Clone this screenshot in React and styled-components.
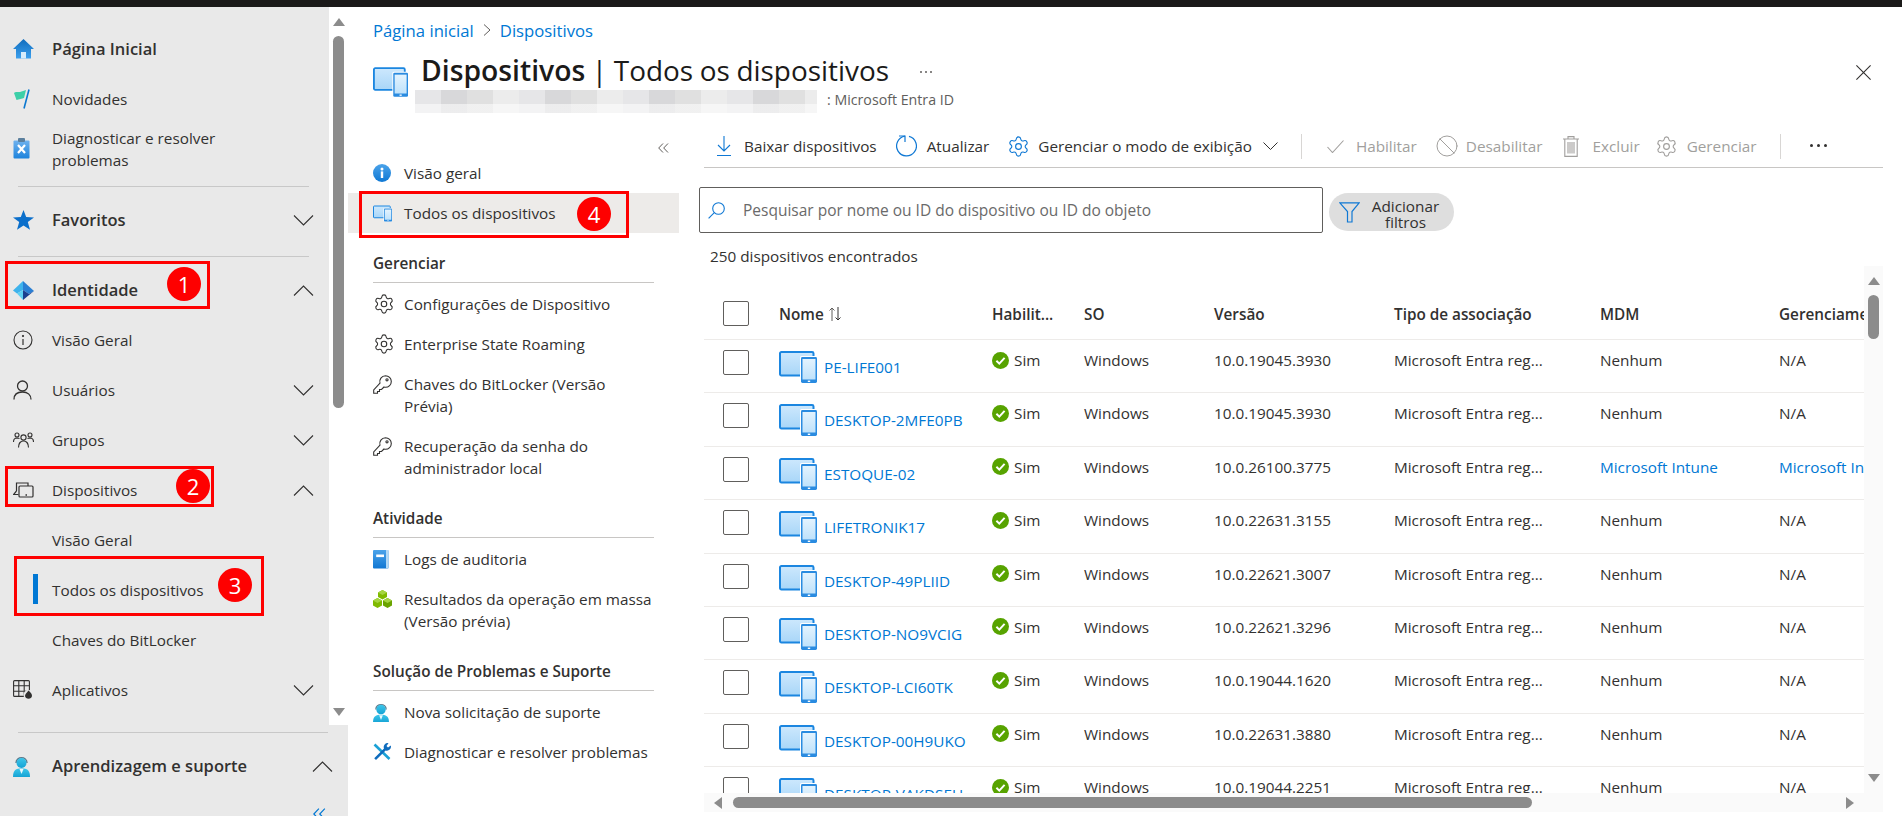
import React from 'react';
import styled, { createGlobalStyle } from 'styled-components';
import { Settings, Ban } from 'lucide-react';

const FONT = `"Open Sans", "Noto Sans", "Liberation Sans", sans-serif`;

const Global = createGlobalStyle`
  html, body { margin: 0; padding: 0; background: #fff; }
  body { font-family: ${FONT}; font-size: 15.3px; color: #323130; overflow: hidden; }
  * { box-sizing: border-box; }
`;

const Page = styled.div`
  position: relative; width: 1902px; height: 816px; overflow: hidden;
  display: flex; flex-direction: column; background: #fff;
`;
const TopBar = styled.div`height: 7px; background: #1b1a19; flex: none;`;
const Body = styled.div`flex: 1; display: flex; min-height: 0;`;

/* left navigation */
const Sidebar = styled.nav`
  width: 348px; flex: none; background: #e9e9e9; display: flex; flex-direction: column; overflow: hidden;
`;
const NavScroll = styled.div`height: 718px; flex: none; display: flex;`;
const NavList = styled.div`width: 329px; flex: none; padding-top: 17px; overflow: hidden;`;
const NavRow = styled.div`
  height: ${p => (p.$tall ? 51 : 50)}px; display: flex; align-items: center; position: relative;
  padding: 0 15px ${p => (p.$tall ? 2 : 0)}px 13px;
`;
const NavIcon = styled.span`
  width: 39px; flex: none; display: flex; align-items: center;
`;
const NavText = styled.span`
  flex: 1; line-height: 22px; white-space: nowrap; color: #323130;
  font-size: ${p => (p.$strong ? '16.5px' : '15.3px')};
  font-weight: ${p => (p.$strong ? 600 : 400)};
`;
const SubText = styled(NavText)`padding-left: 39px;`;
const ActiveBar = styled.span`
  position: absolute; left: 33px; top: 9px; width: 5px; height: 30px; background: #0078d4;
`;
const NavRule = styled.div`
  height: 1px; background: #c8c8c8; margin: 11px 20px 8px 18px;
`;
const NavTrack = styled.div`
  width: 19px; flex: none; background: #fff; display: flex; flex-direction: column; align-items: center;
  padding: 11px 0 9px 0;
`;
const NavThumb = styled.div`
  width: 11px; height: 372px; border-radius: 6px; background: #8c8c8c; margin-top: 10px; flex: none;
`;
const Spacer = styled.div`flex: 1;`;
const ArrowUp = styled.div`
  width: 0; height: 0; flex: none; border-left: 6px solid transparent; border-right: 6px solid transparent;
  border-bottom: 8px solid #8c8c8c;
`;
const ArrowDown = styled(ArrowUp)`
  border-bottom: 0; border-top: 8px solid #8c8c8c;
`;
const ArrowLeft = styled.div`
  width: 0; height: 0; flex: none; border-top: 6px solid transparent; border-bottom: 6px solid transparent;
  border-right: 8px solid #8c8c8c;
`;
const ArrowRight = styled(ArrowLeft)`
  border-right: 0; border-left: 8px solid #8c8c8c;
`;
const FootRule = styled.div`height: 1px; background: #c8c8c8; margin: 7px 20px 8px 18px; flex: none;`;
const FootRow = styled(NavRow)`flex: none;`;
const CollapseNav = styled.div`
  display: flex; justify-content: flex-end; padding-right: 22px; margin-top: 17px; height: 13px; flex: none;
`;

/* right side */
const Content = styled.main`flex: 1; min-width: 0; display: flex; flex-direction: column;`;
const Crumbs = styled.div`
  height: 46px; flex: none; display: flex; align-items: center; gap: 9px; padding-left: 25px;
  font-size: 16.7px; color: #0078d4;
`;
const CrumbSep = styled.span`display: flex;`;
const Header = styled.header`
  height: 67px; flex: none; display: flex; align-items: flex-start; padding: 0 31px 0 25px;
`;
const HeaderIcon = styled.div`width: 48px; padding-top: 14px; flex: none;`;
const TitleBlock = styled.div`flex: 1; min-width: 0;`;
const TitleLine = styled.div`display: flex; align-items: center; height: 35px; white-space: nowrap;`;
const Title = styled.h1`
  margin: 0; font-size: 27.9px; line-height: 35px; font-weight: 400; color: #1b1a19; word-spacing: -0.6px;
  b { font-weight: 600; font-size: 28.3px; }
`;
const TitleMore = styled.span`
  margin-left: 31px; margin-top: 2px; display: flex; gap: 3px;
`;
const TitleDot = styled.span`width: 2px; height: 2px; border-radius: 50%; background: #605e5c;`;
const SubLine = styled.div`display: flex; align-items: flex-start; margin: 2px 0 0 -6px;`;
const Redacted = styled.div`
  width: 402px; height: 23px; flex: none;
  background:
    linear-gradient(#fff0, #fff0 14px, #fff8 14px),
    repeating-linear-gradient(90deg, #e6e6e8 0 26px, #d8d8da 26px 52px, #e0e0e0 52px 78px, #ececec 78px 104px);
`;
const SubText2 = styled.span`
  font-size: 14.2px; line-height: 20px; color: #605e5c; white-space: nowrap; margin-left: 10px;
`;
const CloseBtn = styled.div`padding-top: 11px; flex: none;`;

const Blade = styled.div`flex: 1; min-height: 0; display: flex;`;
const BladeMenu = styled.aside`width: 331px; flex: none; display: flex; flex-direction: column;`;
const MenuCollapse = styled.div`
  height: 33px; flex: none; display: flex; justify-content: flex-end; align-items: flex-end; padding-right: 10px;
`;
const MenuRow = styled.div`
  display: flex; align-items: flex-start; padding: 9px 0 9px 25px; min-height: 40px; flex: none;
  background: ${p => (p.$active ? '#edebe9' : 'transparent')};
`;
const MenuIcon = styled.span`width: 31px; height: 22px; flex: none; display: flex; align-items: center;`;
const MenuText = styled.span`line-height: 22px; white-space: nowrap; color: #323130;`;
const MenuHead = styled.div`
  margin: 19px 25px 1px 25px; padding-bottom: 8px; border-bottom: 1px solid #c8c6c4;
  font-weight: 600; line-height: 22px; color: #323130;
`;

const Main = styled.section`flex: 1; min-width: 0; padding: 0 19px 4px 25px; display: flex; flex-direction: column;`;
const Toolbar = styled.div`
  height: 48px; flex: none; display: flex; align-items: center; border-bottom: 1px solid #c8c6c4; padding-top: 5px;
`;
const Tool = styled.div`
  display: flex; align-items: center; gap: ${p => p.$gap ?? 10}px; margin-left: ${p => p.$ml ?? 0}px;
  color: ${p => (p.$off ? '#a19f9d' : '#323130')}; white-space: nowrap;
`;
const ToolSep = styled.div`width: 1px; height: 25px; background: #d8d6d4; margin-left: ${p => p.$ml}px;`;
const Dots = styled.div`margin-left: 29px; display: flex; gap: 4px; margin-top: -2px;`;
const Dot = styled.span`width: 3px; height: 3px; border-radius: 50%; background: #323130;`;

const SearchRow = styled.div`flex: none; display: flex; margin-top: 19px; margin-left: -5px; align-items: flex-start;`;
const SearchBox = styled.div`
  width: 624px; height: 46px; border: 1px solid #605e5c; border-radius: 2px; display: flex; align-items: center;
  padding-left: 8px; gap: 18px; color: #6a6a6a; font-size: 15.5px;
`;
const FilterPill = styled.div`
  width: 125px; height: 38px; border-radius: 19px; background: #dedede; margin: 6px 0 0 6px; display: flex; align-items: center;
  padding-left: 10px;
`;
const FilterText = styled.div`flex: 1; text-align: center; line-height: 16px; padding: 4px 3px 0 0; color: #323130;`;
const Count = styled.div`flex: none; margin: 12px 0 0 6px; line-height: 22px; height: 22px; color: #323130;`;

const TableArea = styled.div`flex: 1; min-height: 0; margin-top: -1px; display: flex; flex-direction: column;`;
const TableTop = styled.div`flex: 1; min-height: 0; display: flex;`;
const Viewport = styled.div`flex: 1; min-width: 0; overflow: hidden; padding-top: 24px;`;
const GridRow = styled.div`
  display: grid; grid-template-columns: 75px 213px 92px 130px 180px 206px 179px 220px;
  height: ${p => (p.$head ? '50px' : '53.4px')}; width: 1295px;
  border-bottom: 1px solid #edebe9;
`;
const HeadCell = styled.div`
  display: flex; align-items: center; gap: 5px; font-weight: 600; white-space: nowrap; color: #323130; padding-bottom: 1px;
`;
const Check = styled.div`
  width: 26px; height: 25px; margin: ${p => (p.$head ? '11px' : '10px')} 0 0 19px; border: 1px solid #605e5c; border-radius: 2px; background: #fff;
`;
const Cell = styled.div`padding-top: 9px; height: 31px; line-height: 22px; white-space: nowrap; display: flex; align-items: center; gap: 5px;`;
const NameCell = styled.div`display: flex; align-items: flex-start; gap: 7px; padding-top: 11px; white-space: nowrap;`;
const NameLink = styled.span`color: #0078d4; line-height: 22px; margin-top: 5px;`;
const DataLink = styled.span`color: #0078d4;`;
const VTrack = styled.div`
  width: 19px; flex: none; background: #fafafa; display: flex; flex-direction: column; align-items: center; padding-top: 11px;
  padding-bottom: 11px;
`;
const VThumb = styled.div`width: 11px; height: 44px; border-radius: 6px; background: #8c8c8c; margin-top: 10px;`;
const HTrack = styled.div`
  height: 19px; flex: none; background: #fafafa; display: flex; align-items: center; padding: 0 29px 0 10px;
`;
const HThumb = styled.div`height: 11px; width: 799px; border-radius: 6px; background: #8c8c8c; margin-left: 11px; flex: none;`;

/* red annotations laid over the page */
const RedBox = styled.div`
  position: absolute; left: ${p => p.$x}px; top: ${p => p.$y}px; width: ${p => p.$w}px; height: ${p => p.$h}px;
  border: 3px solid #fe0000; pointer-events: none;
`;
const Badge = styled.div`
  position: absolute; left: ${p => p.$x - 17}px; top: ${p => p.$y - 17}px; width: 34px; height: 34px; border-radius: 50%;
  background: #fe0000; color: #fff; font-size: 22px; line-height: 34px; text-align: center;
`;

/* icons */
const Chev = ({ up }) => (
  <svg width="21" height="11" viewBox="0 0 21 11" fill="none" stroke="#323130" strokeWidth="1.1">
    <path d={up ? 'M1 10.5 L10.5 1 L20 10.5' : 'M1 .5 L10.5 10 L20 .5'} />
  </svg>
);
const HomeIcon = () => (
  <svg width="21" height="20" viewBox="0 0 21 20">
    <defs><linearGradient id="hg" x1="0" y1="0" x2="0" y2="1"><stop offset="0" stopColor="#0f6cbd" /><stop offset="1" stopColor="#3ca0ee" /></linearGradient></defs>
    <path d="M10.5 0 L21 10 H18 V19.5 H3 V10 H0 Z" fill="url(#hg)" />
    <path d="M8 13 H13 V19.5 H8 Z" fill="#d6ecfb" />
  </svg>
);
const FlagIcon = () => (
  <svg width="18" height="20" viewBox="0 0 18 20">
    <path d="M1 4 C3 2 5 3.5 7 3 C9 2.5 11 1.8 13 1 L11 9 C9 10 6 10 3.5 11 Z" fill="#3dcfa8" />
    <path d="M16 .5 L11 19.5" stroke="#0b78d0" strokeWidth="1.6" />
  </svg>
);
const ClipIcon = () => (
  <svg width="17" height="21" viewBox="0 0 17 21">
    <defs><linearGradient id="cg" x1="0" y1="0" x2="0" y2="1"><stop offset="0" stopColor="#6fb2ee" /><stop offset="1" stopColor="#1d83dc" /></linearGradient></defs>
    <rect x=".5" y="2.5" width="16" height="18" rx="1" fill="url(#cg)" />
    <rect x="5" y="0" width="7" height="4" rx="1" fill="#5b7f9d" />
    <path d="M5 7 L12 15 M12 7 L5 15" stroke="#fff" strokeWidth="2.2" />
  </svg>
);
const StarIcon = () => (
  <svg width="21" height="20" viewBox="0 0 21 20"><path d="M10.5 0 L13.2 7 L21 7.4 L14.8 12 L17 19.8 L10.5 15.4 L4 19.8 L6.2 12 L0 7.4 L7.8 7 Z" fill="#0b6fcb" /></svg>
);
const EntraIcon = () => (
  <svg width="21" height="19" viewBox="0 0 21 19">
    <path d="M10 0 L0 9.5 L4 12.5 L10 9 Z" fill="#3eb3ec" />
    <path d="M10 0 L21 10 L16 13 L10 9 Z" fill="#2a7fd4" />
    <path d="M10 9 L4 12.5 L10 19 Z" fill="#5fd0f2" />
    <path d="M10 9 L16 13 L21 10 L10 19 Z" fill="#1b3f8f" />
  </svg>
);
const InfoOutline = () => (
  <svg width="20" height="20" viewBox="0 0 20 20" fill="none" stroke="#323130"><circle cx="10" cy="10" r="9" strokeWidth="1.1" /><path d="M10 9 V15" strokeWidth="1.2" /><circle cx="10" cy="6" r=".7" fill="#323130" /></svg>
);
const UserIcon = () => (
  <svg width="19" height="20" viewBox="0 0 19 20" fill="none" stroke="#323130" strokeWidth="1.3"><circle cx="9.5" cy="6" r="5" /><path d="M1 19.5 C1 14.5 4.5 12 9.5 12 C14.5 12 18 14.5 18 19.5" /></svg>
);
const GroupIcon = () => (
  <svg width="21" height="17" viewBox="0 0 21 17" fill="none" stroke="#323130" strokeWidth="1.1">
    <circle cx="4" cy="3" r="2" /><circle cx="17" cy="3" r="2" /><circle cx="10.5" cy="5.5" r="2.6" />
    <path d="M.5 10 C.5 7 2 6 4 6 L6.5 6.5 M20.5 10 C20.5 7 19 6 17 6 L14.5 6.5 M5.5 15.5 C5.5 11 8 9 10.5 9 C13 9 15.5 11 15.5 15.5" />
  </svg>
);
const DevicesOutline = () => (
  <svg width="21" height="16" viewBox="0 0 21 16" fill="none" stroke="#323130" strokeWidth="1.2">
    <path d="M3.5 9 V1 H15 V4 M3.5 9 L.5 12.5 H5.5" />
    <rect x="6" y="4" width="14" height="11" rx="1" />
    <path d="M12.5 13 H14" strokeWidth="1.4" />
  </svg>
);
const AppsIcon = () => (
  <svg width="21" height="20" viewBox="0 0 21 20">
    <g fill="none" stroke="#323130" strokeWidth="1.1">
      <rect x=".6" y=".6" width="15.8" height="15.8" rx="1" />
      <path d="M5.8 .6 V16.4 M11.2 .6 V16.4 M.6 5.8 H16.4 M.6 11.2 H16.4" />
    </g>
    <circle cx="15.5" cy="15" r="5" fill="#e9e9e9" />
    <path d="M15.5 10.5 C17.8 12.4 19 14 19 16 A3.6 3.6 0 0 1 12 16 C12 14 13.5 13 15.5 10.5 Z" fill="#323130" />
  </svg>
);
const SupportIcon = ({ s = 17 }) => (
  <svg width={s} height={s * 1.3} viewBox="0 0 17 22">
    <defs><linearGradient id="sg" x1="0" y1="0" x2="0" y2="1"><stop offset="0" stopColor="#3cc6ea" /><stop offset="1" stopColor="#15a2d4" /></linearGradient></defs>
    <path d="M3 8 C3 1 14 1 14 8" fill="none" stroke="#5d7a8c" strokeWidth="1.4" />
    <circle cx="8.5" cy="8" r="5" fill="url(#sg)" />
    <path d="M0 22 C0 15 3 13.5 8.5 13.5 C14 13.5 17 15 17 22 Z" fill="url(#sg)" />
    <path d="M6.5 14 L8.5 19 L10.5 14 Z" fill="#e9f8fd" />
  </svg>
);
const DevicesColor = ({ w = 35, h = 30 }) => (
  <svg width={w} height={h} viewBox="0 0 38 32">
    <defs>
      <linearGradient id="dg" x1="0" y1="0" x2="0" y2="1"><stop offset="0" stopColor="#cde8fd" /><stop offset="1" stopColor="#a8d6f8" /></linearGradient>
      <linearGradient id="dp" x1="0" y1="0" x2="0" y2="1"><stop offset="0" stopColor="#e3f3fe" /><stop offset="1" stopColor="#bfe2fb" /></linearGradient>
    </defs>
    <rect x="1" y="1" width="33.5" height="23.5" rx="1.4" fill="url(#dg)" stroke="#1b86e0" strokeWidth="2" />
    <rect x="21" y="5" width="17" height="27" rx="1.6" fill="#fff" />
    <rect x="22" y="6" width="16" height="26" rx="1.4" fill="#2a8be0" />
    <rect x="23.5" y="8" width="13" height="20.5" fill="url(#dp)" />
    <rect x="28.8" y="29.6" width="2.4" height="1.4" fill="#fff" />
  </svg>
);
const SimIcon = () => (
  <svg width="17" height="17" viewBox="0 0 17 17"><circle cx="8.5" cy="8.5" r="8.5" fill="#57a300" /><path d="M4.4 8.8 L7.3 11.6 L12.6 5.8" fill="none" stroke="#fff" strokeWidth="2" /></svg>
);
const InfoFill = () => (
  <svg width="18" height="18" viewBox="0 0 18 18"><defs><linearGradient id="ig" x1="0" y1="0" x2="0" y2="1"><stop offset="0" stopColor="#4ba3ea" /><stop offset="1" stopColor="#0f78d4" /></linearGradient></defs><circle cx="9" cy="9" r="9" fill="url(#ig)" /><rect x="7.8" y="7.4" width="2.4" height="6.6" fill="#fff" /><circle cx="9" cy="5" r="1.5" fill="#fff" /></svg>
);
const BookIcon = () => (
  <svg width="16" height="19" viewBox="0 0 16 19"><defs><linearGradient id="bg" x1="0" y1="0" x2="0" y2="1"><stop offset="0" stopColor="#4ba3ea" /><stop offset="1" stopColor="#1077d3" /></linearGradient></defs><rect width="15.5" height="18.5" rx="1" fill="url(#bg)" /><rect x="13" width="2.5" height="18.5" fill="#b3d9f5" /><rect x="3.2" y="4.5" width="7.8" height="2.6" fill="#fff" /></svg>
);
const CubesIcon = () => (
  <svg width="19" height="18" viewBox="0 0 19 18">
    <path d="M9.5 0 L14 2.5 L14 7 L9.5 9.5 L5 7 L5 2.5 Z" fill="#7fba00" /><path d="M5 2.5 L9.5 5 L14 2.5 L9.5 0Z" fill="#a5d540" />
    <path d="M4.5 8 L9 10.5 L9 15.5 L4.5 18 L0 15.5 L0 10.5 Z" fill="#7fba00" /><path d="M0 10.5 L4.5 13 L9 10.5 L4.5 8Z" fill="#a5d540" />
    <path d="M14.5 8 L19 10.5 L19 15.5 L14.5 18 L10 15.5 L10 10.5 Z" fill="#6aa300" /><path d="M10 10.5 L14.5 13 L19 10.5 L14.5 8Z" fill="#a5d540" />
  </svg>
);
const ToolsIcon = () => (
  <svg width="18" height="18" viewBox="0 0 18 18">
    <path d="M1.5 1.5 L16.5 16" stroke="#1aa1d6" strokeWidth="2.6" />
    <path d="M15.5 .2 A4 4 0 0 0 11 5.6 L1.2 15.2 L3 17 L12.6 7.4 A4 4 0 0 0 17.8 2.5 L15 4.5 L13.5 3 Z" fill="#0f6cbd" />
  </svg>
);
const Gear = ({ c = '#323130', s = 23 }) => <Settings size={s} color={c} strokeWidth={1.2} />;
const KeyIcon = () => (
  <svg width="19" height="19" viewBox="0 0 19 19" fill="none" stroke="#323130" strokeWidth="1.1">
    <path d="M12.5 .7 A5.8 5.8 0 0 1 12.5 12.3 A5.8 5.8 0 0 1 11 12 L8.5 14.5 H6.5 V16.5 H4.5 V18.3 H.7 V15 L7 8.2 A5.8 5.8 0 0 1 12.5 .7 Z" />
    <circle cx="14" cy="4.8" r="1.1" />
  </svg>
);
const Download = () => (
  <svg width="14" height="20" viewBox="0 0 14 20" fill="none" stroke="#0f78d4" strokeWidth="1.1"><path d="M7 0 V15 M1 9 L7 15 L13 9 M0 19.5 H14" /></svg>
);
const Refresh = () => (
  <svg width="21" height="22" viewBox="0 0 21 22" fill="none" stroke="#0f78d4" strokeWidth="1.2"><path d="M13 1.4 A9.9 9.9 0 1 1 9 1.2" /><path d="M3 1 H9 V7" /></svg>
);
const SmallChev = () => (
  <svg width="18" height="8" viewBox="-3 0 18 8" fill="none" stroke="#323130" strokeWidth="1"><path d="M.5 .5 L7.5 7.5 L14.5 .5" /></svg>
);
const Tick = () => (
  <svg width="17" height="13" viewBox="0 0 17 13" fill="none" stroke="#a19f9d" strokeWidth="1.1"><path d="M.5 7 L5.5 12.5 L16.5 .5" /></svg>
);
const Trash = () => (
  <svg width="16" height="21" viewBox="0 0 16 21" fill="none" stroke="#a19f9d" strokeWidth="1.1"><path d="M0 3 H16 M5 3 V.6 H11 V3 M1.8 3 V20.4 H14.2 V3 M5 6 V17.5 M7 6 V17.5 M9 6 V17.5 M11 6 V17.5" /></svg>
);
const SearchIcon = () => (
  <svg width="17" height="17" viewBox="0 0 17 17" fill="none" stroke="#0f78d4" strokeWidth="1.1"><circle cx="10.5" cy="6.5" r="5.8" /><path d="M6.3 10.7 L.6 16.4" /></svg>
);
const Funnel = () => (
  <svg width="21" height="21" viewBox="0 0 21 21" fill="none" stroke="#0f78d4" strokeWidth="1.2"><path d="M.8 .8 H20.2 L13 9.5 V20 H8.5 V9.5 Z" /></svg>
);
const Sort = () => (
  <svg width="12" height="14" viewBox="0 0 12 14" fill="none" strokeWidth="1"><path d="M3 14 V1 M.5 3.5 L3 1 L5.5 3.5" stroke="#605e5c" /><path d="M9 0 V13 M6.5 10.5 L9 13 L11.5 10.5" stroke="#323130" /></svg>
);
const DoubleChev = ({ c = '#605e5c', w = 11, h = 10 }) => (
  <svg width={w} height={h} viewBox="0 0 11 10" fill="none" stroke={c} strokeWidth="1"><path d="M5 .5 L.7 5 L5 9.5 M10 .5 L5.7 5 L10 9.5" /></svg>
);
const CloseIcon = () => (
  <svg width="15" height="15" viewBox="0 0 15 15" fill="none" stroke="#323130" strokeWidth="1.1"><path d="M.4 .4 L14.6 14.6 M14.6 .4 L.4 14.6" /></svg>
);

const NAV = [
  { k: 'home', icon: <HomeIcon />, text: 'Página Inicial', strong: true },
  { k: 'news', icon: <FlagIcon />, text: 'Novidades' },
  { k: 'diag', icon: <ClipIcon />, text: <>Diagnosticar e resolver<br />problemas</>, tall: true },
  { k: 'r1', rule: true },
  { k: 'fav', icon: <StarIcon />, text: 'Favoritos', strong: true, chev: 'down' },
  { k: 'r2', rule: true },
  { k: 'id', icon: <EntraIcon />, text: 'Identidade', strong: true, chev: 'up' },
  { k: 'vg', icon: <InfoOutline />, text: 'Visão Geral' },
  { k: 'us', icon: <UserIcon />, text: 'Usuários', chev: 'down' },
  { k: 'gr', icon: <GroupIcon />, text: 'Grupos', chev: 'down' },
  { k: 'dv', icon: <DevicesOutline />, text: 'Dispositivos', chev: 'up' },
  { k: 'vg2', sub: true, text: 'Visão Geral' },
  { k: 'td', sub: true, text: 'Todos os dispositivos', active: true },
  { k: 'bl', sub: true, text: 'Chaves do BitLocker' },
  { k: 'ap', icon: <AppsIcon />, text: 'Aplicativos', chev: 'down' },
];

const DEVICES = [
  ['PE-LIFE001', '10.0.19045.3930'],
  ['DESKTOP-2MFE0PB', '10.0.19045.3930'],
  ['ESTOQUE-02', '10.0.26100.3775', true],
  ['LIFETRONIK17', '10.0.22631.3155'],
  ['DESKTOP-49PLIID', '10.0.22621.3007'],
  ['DESKTOP-NO9VCIG', '10.0.22621.3296'],
  ['DESKTOP-LCI60TK', '10.0.19044.1620'],
  ['DESKTOP-00H9UKO', '10.0.22631.3880'],
  ['DESKTOP-VAKDSEU', '10.0.19044.2251'],
];

const MenuItem = ({ icon, children, active }) => (
  <MenuRow $active={active}>
    <MenuIcon>{icon}</MenuIcon>
    <MenuText>{children}</MenuText>
  </MenuRow>
);

export default function App() {
  return (
    <Page>
      <Global />
      <TopBar />
      <Body>
        <Sidebar>
          <NavScroll>
            <NavList>
              {NAV.map(n => n.rule ? <NavRule key={n.k} /> : (
                <NavRow key={n.k} $tall={n.tall}>
                  {n.active && <ActiveBar />}
                  {n.sub ? <SubText>{n.text}</SubText> : (
                    <>
                      <NavIcon>{n.icon}</NavIcon>
                      <NavText $strong={n.strong}>{n.text}</NavText>
                    </>
                  )}
                  {n.chev && <Chev up={n.chev === 'up'} />}
                </NavRow>
              ))}
            </NavList>
            <NavTrack>
              <ArrowUp />
              <NavThumb />
              <Spacer />
              <ArrowDown />
            </NavTrack>
          </NavScroll>
          <FootRule />
          <FootRow>
            <NavIcon><SupportIcon /></NavIcon>
            <NavText $strong>Aprendizagem e suporte</NavText>
            <Chev up />
          </FootRow>
          <CollapseNav><DoubleChev c="#0078d4" w={13} h={12} /></CollapseNav>
        </Sidebar>
        <Content>
          <Crumbs>
            <span>Página inicial</span>
            <CrumbSep><svg width="8" height="12" viewBox="0 0 8 12" fill="none" stroke="#605e5c"><path d="M1 .5 L7 6 L1 11.5" /></svg></CrumbSep>
            <span>Dispositivos</span>
          </Crumbs>
          <Header>
            <HeaderIcon><DevicesColor /></HeaderIcon>
            <TitleBlock>
              <TitleLine>
                <Title><b>Dispositivos</b> | Todos os dispositivos</Title>
                <TitleMore><TitleDot /><TitleDot /><TitleDot /></TitleMore>
              </TitleLine>
              <SubLine>
                <Redacted />
                <SubText2>: Microsoft Entra ID</SubText2>
              </SubLine>
            </TitleBlock>
            <CloseBtn><CloseIcon /></CloseBtn>
          </Header>
          <Blade>
            <BladeMenu>
              <MenuCollapse><DoubleChev /></MenuCollapse>
              <MenuItem icon={<InfoFill />}>Visão geral</MenuItem>
              <MenuItem active icon={<DevicesColor w={19} h={17} />}>Todos os dispositivos</MenuItem>
              <MenuHead>Gerenciar</MenuHead>
              <MenuItem icon={<Gear s={22} />}>Configurações de Dispositivo</MenuItem>
              <MenuItem icon={<Gear s={22} />}>Enterprise State Roaming</MenuItem>
              <MenuItem icon={<KeyIcon />}>Chaves do BitLocker (Versão<br />Prévia)</MenuItem>
              <MenuItem icon={<KeyIcon />}>Recuperação da senha do<br />administrador local</MenuItem>
              <MenuHead>Atividade</MenuHead>
              <MenuItem icon={<BookIcon />}>Logs de auditoria</MenuItem>
              <MenuItem icon={<CubesIcon />}>Resultados da operação em massa<br />(Versão prévia)</MenuItem>
              <MenuHead>Solução de Problemas e Suporte</MenuHead>
              <MenuItem icon={<SupportIcon s={16} />}>Nova solicitação de suporte</MenuItem>
              <MenuItem icon={<ToolsIcon />}>Diagnosticar e resolver problemas</MenuItem>
            </BladeMenu>
            <Main>
              <Toolbar>
                <Tool $ml={13} $gap={13}><Download />Baixar dispositivos</Tool>
                <Tool $ml={19}><Refresh />Atualizar</Tool>
                <Tool $ml={18} $gap={8}><Gear c="#0f78d4" />Gerenciar o modo de exibição<SmallChev /></Tool>
                <ToolSep $ml={23} />
                <Tool $off $ml={25} $gap={12}><Tick />Habilitar</Tool>
                <Tool $off $ml={18} $gap={7}><Ban size={24} color="#a19f9d" strokeWidth={1} />Desabilitar</Tool>
                <Tool $off $ml={21} $gap={13}><Trash />Excluir</Tool>
                <Tool $off $ml={15} $gap={9}><Gear c="#a19f9d" />Gerenciar</Tool>
                <ToolSep $ml={23} />
                <Dots><Dot /><Dot /><Dot /></Dots>
              </Toolbar>
              <SearchRow>
                <SearchBox>
                  <SearchIcon />
                  <span>Pesquisar por nome ou ID do dispositivo ou ID do objeto</span>
                </SearchBox>
                <FilterPill>
                  <Funnel />
                  <FilterText>Adicionar<br />filtros</FilterText>
                </FilterPill>
              </SearchRow>
              <Count>250 dispositivos encontrados</Count>
              <TableArea>
                <TableTop>
                  <Viewport>
                    <GridRow $head>
                      <Check $head />
                      <HeadCell>Nome <Sort /></HeadCell>
                      <HeadCell>Habilit...</HeadCell>
                      <HeadCell>SO</HeadCell>
                      <HeadCell>Versão</HeadCell>
                      <HeadCell>Tipo de associação</HeadCell>
                      <HeadCell>MDM</HeadCell>
                      <HeadCell>Gerenciamento</HeadCell>
                    </GridRow>
                    {DEVICES.map(([name, ver, intune]) => (
                      <GridRow key={name}>
                        <Check />
                        <NameCell><DevicesColor w={38} h={32} /><NameLink>{name}</NameLink></NameCell>
                        <Cell><SimIcon />Sim</Cell>
                        <Cell>Windows</Cell>
                        <Cell>{ver}</Cell>
                        <Cell>Microsoft Entra reg...</Cell>
                        <Cell>{intune ? <DataLink>Microsoft Intune</DataLink> : 'Nenhum'}</Cell>
                        <Cell>{intune ? <DataLink>Microsoft Intune</DataLink> : 'N/A'}</Cell>
                      </GridRow>
                    ))}
                  </Viewport>
                  <VTrack>
                    <ArrowUp />
                    <VThumb />
                    <Spacer />
                    <ArrowDown />
                  </VTrack>
                </TableTop>
                <HTrack>
                  <ArrowLeft />
                  <HThumb />
                  <Spacer />
                  <ArrowRight />
                </HTrack>
              </TableArea>
            </Main>
          </Blade>
        </Content>
      </Body>
      <RedBox $x={5} $y={261} $w={205} $h={48} />
      <Badge $x={184} $y={284}>1</Badge>
      <RedBox $x={5} $y={466} $w={209} $h={41} />
      <Badge $x={193} $y={486}>2</Badge>
      <RedBox $x={14} $y={556} $w={250} $h={60} />
      <Badge $x={235} $y={585}>3</Badge>
      <RedBox $x={359} $y={191} $w={270} $h={47} />
      <Badge $x={594} $y={214}>4</Badge>
    </Page>
  );
}
